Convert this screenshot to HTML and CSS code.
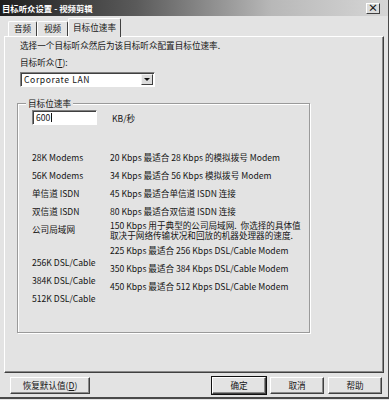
FILE: index.html
```html
<!DOCTYPE html>
<html>
<head>
<meta charset="utf-8">
<title>目标听众设置 - 视频剪辑</title>
<link rel="stylesheet" href="styles.css">
</head>
<body>
<div class="window">
    <div class="titlebar">
        <span class="title">目标听众设置 - 视频剪辑</span>
        <span class="close">×</span>
    </div>

    <div class="tabs">
        <div class="tab">音频</div>
        <div class="tab">视频</div>
        <div class="tab active">目标位速率</div>
    </div>

    <div class="panel">
        <p class="intro">选择一个目标听众然后为该目标听众配置目标位速率.</p>
        <div class="field-label">目标听众(<u>T</u>):</div>
        <div class="select">
            <span class="select-text">Corporate LAN</span>
            <span class="drop"><span class="arrow"></span></span>
        </div>

        <div class="group">
            <span class="group-title">目标位速率</span>
            <div class="rate-row">
                <div class="text-input">600<span class="caret"></span></div>
                <span class="unit">KB/秒</span>
            </div>
            <div class="rates">
                <div class="col-left">
                    <div class="item">28K Modems</div>
                    <div class="item">56K Modems</div>
                    <div class="item">单信道 ISDN</div>
                    <div class="item">双信道 ISDN</div>
                    <div class="item">公司局域网</div>
                    <div class="item gap">256K DSL/Cable</div>
                    <div class="item">384K DSL/Cable</div>
                    <div class="item">512K DSL/Cable</div>
                </div>
                <div class="col-right">
                    <div class="item">20 Kbps 最适合 28 Kbps 的模拟拨号 Modem</div>
                    <div class="item">34 Kbps 最适合 56 Kbps 模拟拨号 Modem</div>
                    <div class="item">45 Kbps 最适合单信道 ISDN 连接</div>
                    <div class="item">80 Kbps 最适合双信道 ISDN 连接</div>
                    <div class="item two-line">150 Kbps 用于典型的公司局域网.&nbsp; 你选择的具体值<br>取决于网络传输状况和回放的机器处理器的速度.</div>
                    <div class="item">225 Kbps 最适合 256 Kbps DSL/Cable Modem</div>
                    <div class="item">350 Kbps 最适合 384 Kbps DSL/Cable Modem</div>
                    <div class="item">450 Kbps 最适合 512 Kbps DSL/Cable Modem</div>
                </div>
            </div>
        </div>
    </div>

    <div class="buttons">
        <div class="btn wide">恢复默认值(<u>D</u>)</div>
        <div class="btn-group">
            <div class="btn default">确定</div>
            <div class="btn">取消</div>
            <div class="btn">帮助</div>
        </div>
    </div>
</div>
</body>
</html>
```

FILE: styles.css
```css
html, body { margin: 0; padding: 0; background: #e3e3e3; }
body { font-family: "Noto Sans CJK SC", "Noto Sans", sans-serif; font-size: 8.6px; color: #141414; }
u { text-decoration: underline; }

.window { width: 389px; height: 399px; box-sizing: border-box; border-right: 1px solid #4a4a4a; border-bottom: 2px solid #4a4a4a; background: #e3e3e3; }

/* title bar */
.titlebar { height: 16px; display: flex; align-items: center; justify-content: space-between; background: linear-gradient(to right, #1e1e1e 0%, #5a5a5a 35%, #b8b8b8 70%, #d6d6d6 100%); }
.title { color: #fff; font-weight: bold; font-size: 8.4px; padding-left: 2px; line-height: 16px; }
.close { width: 14px; height: 11px; margin-right: 8px; box-sizing: border-box; background: #dcdcdc; border: 1px solid; border-color: #fff #404040 #404040 #fff; font-size: 10px; line-height: 8px; text-align: center; font-weight: bold; color: #111; }

/* tabs */
.tabs { height: 20px; box-sizing: border-box; padding-left: 8px; display: flex; align-items: flex-end; }
.tab { height: 15px; box-sizing: border-box; white-space: nowrap; text-align: center; line-height: 13px; border-top: 1px solid #fff; border-left: 1px solid #fff; border-right: 1px solid #404040; border-radius: 2px 2px 0 0; }
.tab:first-child { width: 29px; }
.tab:nth-child(2) { width: 31px; }
.tab.active { width: 53px; height: 19px; margin-bottom: -1px; position: relative; z-index: 1; background: #e3e3e3; line-height: 17px; }

/* panel */
.panel { margin-left: 4px; width: 380px; height: 337px; box-sizing: border-box; padding: 2px 0 0 15px; border: 1px solid; border-color: #fff #404040 #404040 #fff; box-shadow: inset -1px -1px 0 #8a8a8a; }
.intro { margin: 0; line-height: 12px; }
.field-label { margin-top: 5px; line-height: 12px; }
.select { margin-top: 4px; width: 135px; height: 15px; box-sizing: border-box; background: #fff; border: 1px solid; border-color: #808080 #fff #fff #808080; box-shadow: inset 1px 1px 0 #404040; display: flex; align-items: center; justify-content: space-between; }
.select-text { padding-left: 3px; line-height: 13px; letter-spacing: 0.6px; }
.drop { width: 12px; height: 11px; margin-right: 1px; box-sizing: border-box; background: #dcdcdc; border: 1px solid; border-color: #f4f4f4 #404040 #404040 #f4f4f4; display: flex; align-items: center; justify-content: center; }
.arrow { width: 0; height: 0; border-left: 3px solid transparent; border-right: 3px solid transparent; border-top: 3px solid #111; }

/* group box */
.group { position: relative; margin: 16px 0 0 -3px; width: 293px; height: 230px; box-sizing: border-box; padding: 6px 0 0 14px; border: 1px solid #9a9a9a; box-shadow: 1px 1px 0 #fff, inset 1px 1px 0 #fff; }
.group-title { position: absolute; top: -7px; left: 8px; padding: 0 2px; background: #e3e3e3; line-height: 12px; }
.rate-row { display: flex; align-items: center; }
.text-input { width: 65px; height: 15px; box-sizing: border-box; background: #fff; border: 1px solid; border-color: #808080 #fff #fff #808080; box-shadow: inset 1px 1px 0 #404040; padding-left: 3px; line-height: 13px; display: flex; align-items: center; }
.caret { width: 1px; height: 9px; background: #111; margin-left: 1px; }
.unit { margin-left: 15px; }

.rates { margin-top: 23px; display: flex; }
.col-left { width: 78px; }
.item { height: 18px; line-height: 18px; white-space: nowrap; }
.col-left .gap { margin-top: 15px; }
.col-right .two-line { height: 21px; box-sizing: border-box; padding-top: 0; line-height: 10px; }

/* buttons */
.buttons { margin-top: 4px; padding: 0 6px 0 10px; display: flex; justify-content: space-between; }
.btn-group { display: flex; gap: 4px; }
.btn { width: 54px; height: 17px; box-sizing: border-box; border: 1px solid; border-color: #fff #404040 #404040 #fff; box-shadow: inset -1px -1px 0 #8a8a8a; text-align: center; line-height: 15px; }
.btn.wide { width: 80px; }
.btn.default { outline: 1px solid #111; outline-offset: 0; }
```
